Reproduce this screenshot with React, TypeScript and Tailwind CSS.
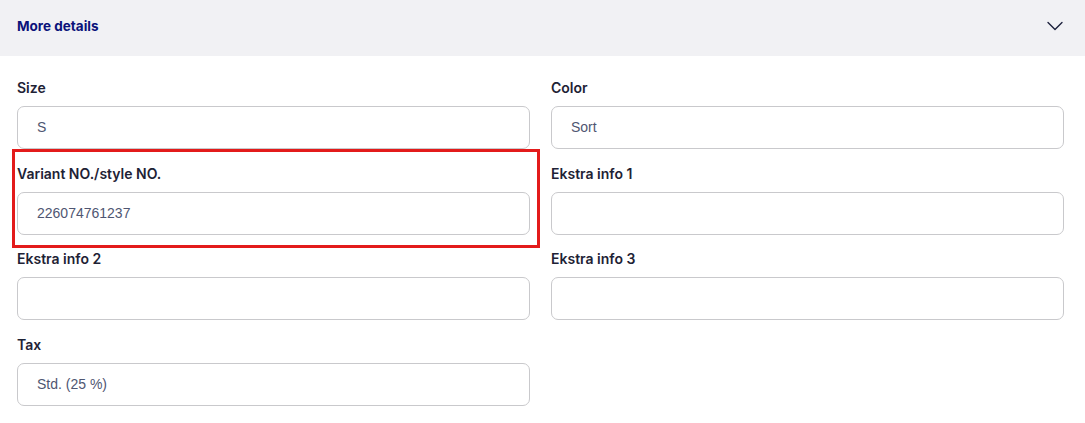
import { ChevronDown } from "lucide-react";

const fields = [
  { label: "Size", value: "S" },
  { label: "Color", value: "Sort" },
  { label: "Variant NO./style NO.", value: "226074761237", highlight: true },
  { label: "Ekstra info 1", value: "" },
  { label: "Ekstra info 2", value: "" },
  { label: "Ekstra info 3", value: "" },
  { label: "Tax", value: "Std. (25 %)" },
];

export default function App() {
  return (
    <div className="w-[1085px] h-[423px] bg-white overflow-hidden" style={{ fontFamily: "Inter, 'Liberation Sans', sans-serif" }}>
      <div className="h-[56px] bg-[#f1f1f4] flex items-center justify-between pl-[17px] pr-[16px] pb-1">
        <span className="text-[13.5px] font-bold text-[#0b127a]">More details</span>
        <ChevronDown className="w-7 h-7 text-[#1b1f3b]" strokeWidth={1.15} />
      </div>

      <div className="grid grid-cols-2 gap-x-[21px] gap-y-[14.5px] px-[17px] pr-[21px] pt-[22px]">
        {fields.map((f, i) => (
          <div key={i} className="relative">
            <label className="block h-5 leading-5 mb-2 text-[14px] font-semibold text-[#1e2235]">
              {f.label}
            </label>
            <div className="h-[43px] rounded-[7px] border border-[#c9c9cc] flex items-center px-[19px]">
              <span className="text-[14px] text-[#4f5672]" style={{ fontFamily: "'Liberation Sans', Arial, sans-serif" }}>
                {f.value}
              </span>
            </div>
            {f.highlight && (
              <div className="absolute -left-[5px] -right-[10px] -top-[15px] -bottom-[13px] border-[3px] border-[#e31b1b] pointer-events-none" />
            )}
          </div>
        ))}
      </div>
    </div>
  );
}
